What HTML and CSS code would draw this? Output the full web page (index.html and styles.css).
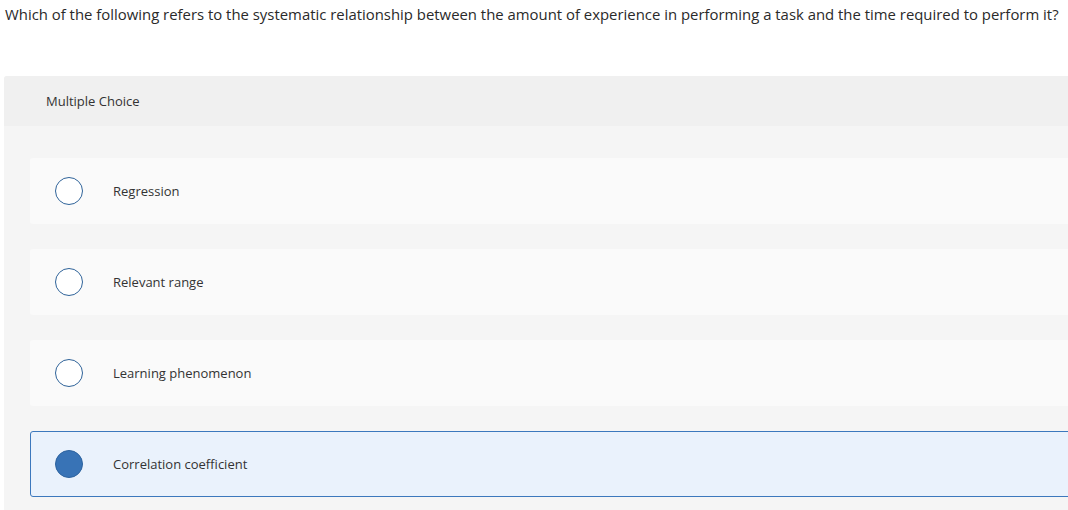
FILE: index.html
```html
<!DOCTYPE html>
<html>
<head>
<meta charset="utf-8">
<link rel="stylesheet" href="styles.css">
</head>
<body>
<p class="question">Which of the following refers to the systematic relationship between the amount of experience in performing a task and the time required to perform it?</p>
<div class="panel">
  <div class="panel-head">Multiple Choice</div>
  <div class="options">
    <div class="option"><span class="radio"></span><span class="label">Regression</span></div>
    <div class="option"><span class="radio"></span><span class="label">Relevant range</span></div>
    <div class="option"><span class="radio"></span><span class="label">Learning phenomenon</span></div>
    <div class="option selected"><span class="radio"></span><span class="label">Correlation coefficient</span></div>
  </div>
</div>
</body>
</html>
```
FILE: styles.css
```css
html, body {
  margin: 0;
  padding: 0;
  background: #fff;
  font-family: "Open Sans", Lato, sans-serif;
  color: #222;
  overflow: hidden;
}
.question {
  margin: 0;
  padding: 5px 0 0 5px;
  font-size: 14.9px;
  line-height: 18px;
  white-space: nowrap;
  color: #2a2a2a;
}
.panel {
  margin: 53px 0 0 4px;
  border-radius: 3px 0 0 0;
  background: #f5f5f5;
  overflow: hidden;
}
.panel-head {
  background: #f0f0f0;
  height: 50px;
  line-height: 51px;
  padding-left: 42px;
  font-size: 13px;
  color: #333;
}
.options {
  display: flex;
  flex-direction: column;
  gap: 25px;
  padding: 32px 0 20px 26px;
}
.option {
  height: 66px;
  box-sizing: border-box;
  margin-right: -10px;
  background: #fafafa;
  border-radius: 3px;
  display: flex;
  align-items: center;
  padding-left: 25px;
}
.option.selected {
  background: #eaf2fc;
  border: 1px solid #3c78bd;
  padding-left: 24px;
}
.radio {
  width: 28px;
  height: 28px;
  box-sizing: border-box;
  border-radius: 50%;
  border: 1.5px solid #2f6399;
  background: #fff;
  flex: none;
}
.selected .radio {
  background: #3873b6;
  border-color: #2d639f;
}
.label {
  margin-left: 30px;
  font-size: 13px;
  color: #333;
}
```
